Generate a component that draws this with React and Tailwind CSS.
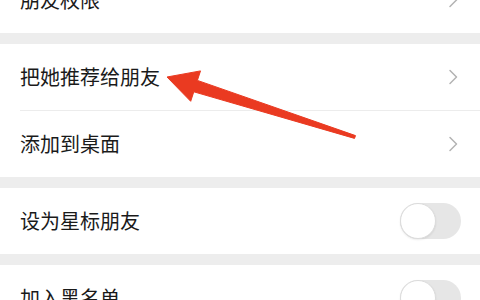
import React from 'react';

const Chevron = () => (
  <svg width="10" height="16" viewBox="0 0 10 16" fill="none" className="shrink-0">
    <path d="M2 1.5 L8.5 8 L2 14.5" stroke="#b3b3b3" strokeWidth="1.5" strokeLinecap="round" strokeLinejoin="round" />
  </svg>
);

const Toggle = () => (
  <div className="relative w-[61px] h-[36px] mr-[-3px] rounded-full bg-[#e6e6e6] shrink-0">
    <div className="absolute left-0 top-0 w-[36px] h-[36px] rounded-full bg-white border border-[#dcdcdc] shadow-[0_1px_2px_rgba(0,0,0,0.08)]" />
  </div>
);

const Row = ({ label, right, divider }) => (
  <div className="bg-white">
    <div className="h-[66px] flex items-center justify-between pl-5 pr-[22px]">
      <span className="text-[20px] text-[#1a1a1a] leading-none">{label}</span>
      {right}
    </div>
    {divider && <div className="ml-5 h-px bg-[#ececec]" />}
  </div>
);

const Gap = () => <div className="h-[11px] bg-[#ededed]" />;

export default function App() {
  return (
    <div
      className="relative w-[480px] h-[300px] overflow-hidden bg-white"
      style={{ fontFamily: '"Noto Sans CJK SC", "Noto Sans", sans-serif' }}
    >
      <div className="flex flex-col mt-[-33px]">
        <Row label="朋友权限" right={<Chevron />} />
        <Gap />
        <Row label="把她推荐给朋友" right={<Chevron />} divider />
        <Row label="添加到桌面" right={<Chevron />} />
        <Gap />
        <Row label="设为星标朋友" right={<Toggle />} />
        <Gap />
        <Row label="加入黑名单" right={<Toggle />} />
      </div>
      <svg className="absolute inset-0 pointer-events-none" width="480" height="300" viewBox="0 0 480 300">
        <polygon
          points="167,77 200.5,70.9 197.4,80.4 355.5,135.6 354.5,138.4 193.8,91.8 190.7,101.3"
          fill="#ea3a21"
          stroke="#ea3a21"
          strokeWidth="1"
          strokeLinejoin="round"
        />
      </svg>
    </div>
  );
}
